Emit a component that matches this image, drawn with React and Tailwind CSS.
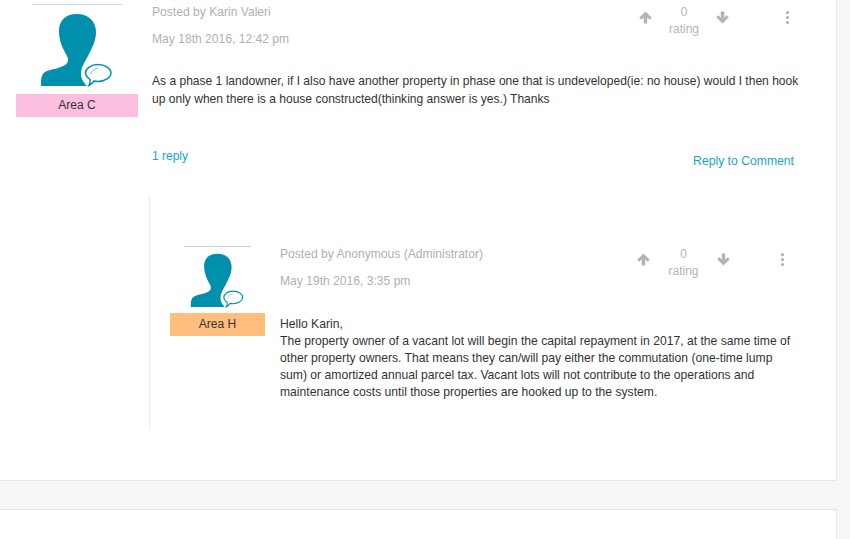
const Avatar = ({ small }) => (
    <svg viewBox="0 1 90 89" className={small ? 'w-[67px] h-[66px]' : 'w-[90px] h-[89px]'}>
        <path
            d="M9 82 C9 74 9.500 70.500 13 68 C18 65 27 65 33 61 C37 58 36.500 55 35 52 C31 45 27 37 27 27 C27 16 34 10 45 10 C56 10 64 17 64 28 C64 37 60 44 56 52 C52 59 49 64 49 70 C49 75 52 79 55 82 Z"
            fill="#008fac"
        />
        <path
            d="M53.500 69 C53.500 64.500 59 60.500 66 60.500 C73 60.500 79 64.500 79 69 C79 73.500 73 77.500 66 77.500 C64.500 77.500 63 77.300 62 77 C60.500 79 59 80.500 57 81.500 C58 79.500 58.500 77.500 58 75.500 C55.500 73.500 53.500 71.500 53.500 69 Z"
            fill="#ffffff"
            stroke="#008fac"
            strokeWidth="1.500"
        />
        <path d="M58.700 70 C59.500 67 62 64.800 66 64" fill="none" stroke="#7cc6d6" strokeWidth="1" />
    </svg>
);

const Arrow = ({ down }) => (
    <svg viewBox="0 0 12 12" className={`w-[13px] h-[13px] ${down ? 'rotate-180' : ''}`}>
        <path d="M6 0.500 L11.800 6.200 L9.800 8 L7.600 5.800 L7.600 11.500 L4.400 11.500 L4.400 5.800 L2.200 8 L0.200 6.200 Z" fill="#b3b3b3" />
    </svg>
);

const Dots = () => (
    <div className="flex flex-col gap-[2px]">
        <span className="w-[3px] h-[3px] rounded-full bg-[#aaaaaa]" />
        <span className="w-[3px] h-[3px] rounded-full bg-[#aaaaaa]" />
        <span className="w-[3px] h-[3px] rounded-full bg-[#aaaaaa]" />
    </div>
);

const Rating = ({ midClass, dotsClass }) => (
    <div className="flex items-start text-[12px] leading-[17px] text-[#b5b5b5]">
        <div className="mt-[8px]"><Arrow /></div>
        <div className={`${midClass} mt-[1px] text-center`}>
            <div>0</div>
            <div>rating</div>
        </div>
        <div className="mt-[8px]"><Arrow down /></div>
        <div className={`${dotsClass} mt-[8px]`}><Dots /></div>
    </div>
);

const App = () => {
    return (
        <div className="h-[539px] w-[850px] overflow-hidden bg-[#f7f7f7] font-['Liberation_Sans',sans-serif]">
            <div className="w-[837px] h-[481px] bg-white border-r border-b border-[#e6e6e6] pt-[4px]">
                {/* top comment */}
                <div className="flex">
                    <div className="ml-4 w-[122px] flex flex-col items-center">
                        <div className="w-[90px] h-[90px] border-t border-t-[#c5d3e6] flex justify-center">
                            <Avatar />
                        </div>
                        <div className="w-[122px] h-[23px] bg-[#fcbfe0] text-[12px] leading-[23px] text-center text-[#333333]">Area C</div>
                    </div>
                    <div className="ml-[14px] w-[650px]">
                        <div className="flex justify-between -mt-[1px]">
                            <div className="text-[12.100px] text-[#b0b0b0]">
                                <div className="leading-[18px]">Posted by Karin Valeri</div>
                                <div className="leading-[18px] mt-[9px]">May 18th 2016, 12:42 pm</div>
                            </div>
                            <div className="mr-[13px]"><Rating midClass="w-[64px]" dotsClass="ml-[57px]" /></div>
                        </div>
                        <p className="mt-[25px] text-[12.060px] leading-[17.500px] text-[#333333]">
                            As a phase 1 landowner, if I also have another property in phase one that is undeveloped(ie: no house) would I then hook up only when there is a house constructed(thinking answer is yes.) Thanks
                        </p>
                        <div className="flex justify-between items-start mt-[39px] text-[12.200px] text-[#1aa5bd]">
                            <a className="leading-[18px] text-[12px]">1 reply</a>
                            <a className="leading-[18px] mt-[5px] mr-[8px]">Reply to Comment</a>
                        </div>
                    </div>
                </div>

                {/* reply */}
                <div className="ml-[149px] mt-[26px] h-[234px] border-l border-[#ececec] pt-[50px] flex">
                    <div className="ml-[20px] w-[95px] flex flex-col items-center">
                        <div className="w-[67px] h-[67px] border-t border-t-[#c5d3e6] flex justify-center">
                            <Avatar small />
                        </div>
                        <div className="w-[95px] h-[23px] bg-[#ffbe7d] text-[12px] leading-[23px] text-center text-[#333333]">Area H</div>
                    </div>
                    <div className="ml-[15px] w-[515px]">
                        <div className="flex justify-between -mt-[1px]">
                            <div className="text-[12.100px] text-[#b0b0b0]">
                                <div className="leading-[18px]">Posted by Anonymous (Administrator)</div>
                                <div className="leading-[18px] mt-[9px]">May 19th 2016, 3:35 pm</div>
                            </div>
                            <div className="mr-[11px]"><Rating midClass="w-[67px]" dotsClass="ml-[51px]" /></div>
                        </div>
                        <p className="mt-[26px] text-[12.150px] leading-[17px] text-[#333333]">
                            Hello Karin,<br />
                            The property owner of a vacant lot will begin the capital repayment in 2017, at the same time of other property owners. That means they can/will pay either the commutation (one-time lump sum) or amortized annual parcel tax. Vacant lots will not contribute to the operations and maintenance costs until those properties are hooked up to the system.
                        </p>
                    </div>
                </div>
            </div>
            <div className="mt-[28px] w-[837px] h-[40px] bg-white border-r border-t border-[#e6e6e6]" />
        </div>
    );
};

export default App;
